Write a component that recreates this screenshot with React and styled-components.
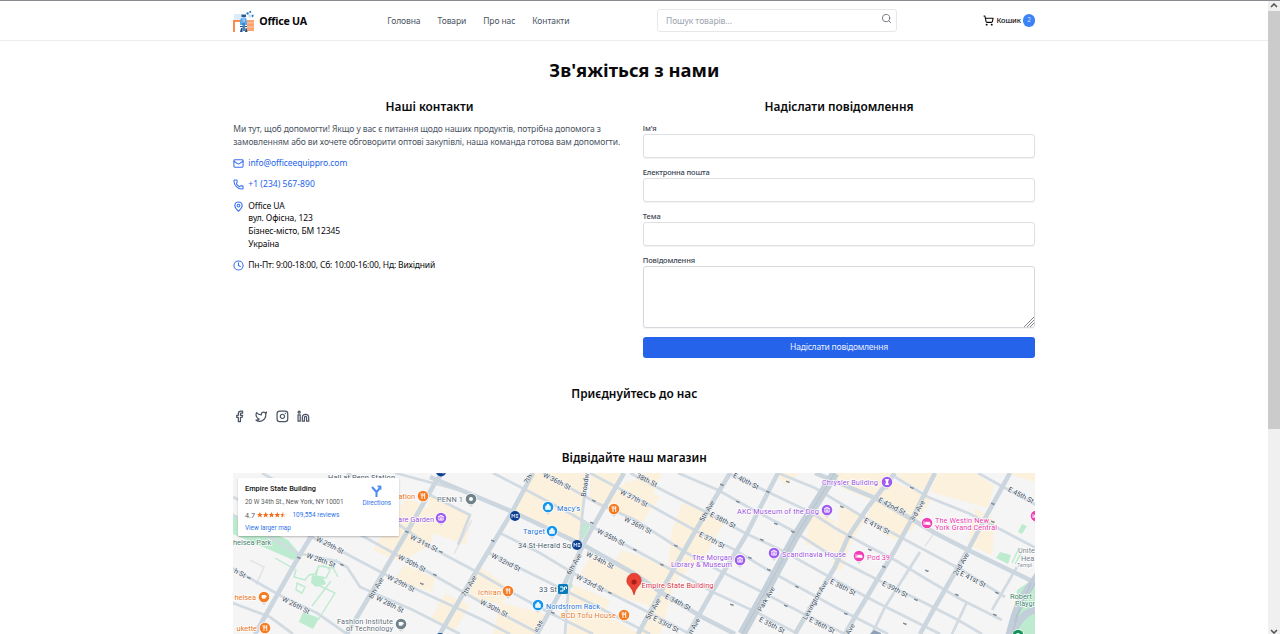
import React from "react";
import styled, { createGlobalStyle } from "styled-components";
import { Mail, Phone, MapPin, Clock, Search, ShoppingCart, Facebook, Twitter, Instagram, Linkedin } from "lucide-react";

const Global = createGlobalStyle`
  *, *::before, *::after { box-sizing: border-box; }
  html, body { margin: 0; height: 634px; overflow: hidden; background: #fff; }
  body { font-family: "Noto Sans", "Open Sans", sans-serif; font-size: 8.53px; line-height: 12.8px; color: #09090b; }
  h1, h2, p, ul { margin: 0; padding: 0; }
  a { color: inherit; text-decoration: none; }
  svg { display: block; flex: none; }
`;

const Screen = styled.div`
  display: flex;
  width: 1280px;
  height: 634px;
  overflow: hidden;
  border-top: 1px solid #8b898f;
`;
const Page = styled.div`
  width: 1268px;
  height: 633px;
  overflow: hidden;
`;
const Header = styled.header`
  height: 40px;
  border-bottom: 1px solid #ececee;
  padding: 0 232.7px 0 233.3px;
  display: flex;
  align-items: center;
`;
const Brand = styled.a`
  display: flex;
  align-items: center;
  gap: 4px;
  width: 154px;
  padding-top: 1px;
  font-size: 10.67px;
  font-weight: 700;
  letter-spacing: -0.25px;
`;
const Nav = styled.nav`
  display: flex;
  gap: 17px;
  width: 269.7px;
  padding-top: 1px;
  color: #4b5563;
  letter-spacing: -0.11px;
  white-space: nowrap;
`;
const SearchBox = styled.label`
  width: 240px;
  height: 23px;
  border: 1px solid #e5e7eb;
  border-radius: 3px;
  display: flex;
  justify-content: space-between;
  padding: 0 4px 0 8px;
  color: #71717a;
  svg { margin-top: 3px; }
`;
const SearchInput = styled.input`
  border: 0;
  outline: 0;
  padding: 1.5px 0 0;
  width: 190px;
  background: transparent;
  font: inherit;
  letter-spacing: -0.1px;
  &::placeholder { color: #9ca3af; }
`;
const Cart = styled.a`
  margin-left: auto;
  display: flex;
  align-items: center;
  gap: 2px;
  font-size: 7.47px;
  font-weight: 500;
  letter-spacing: -0.1px;
`;
const Badge = styled.span`
  width: 12.5px;
  height: 12.5px;
  border-radius: 50%;
  background: #3b82f6;
  color: #dbeafe;
  font-size: 6.4px;
  line-height: 12.5px;
  font-weight: 400;
  text-align: center;
`;
const Main = styled.main`
  padding: 17px 232.7px 0 233.3px;
`;
const Title = styled.h1`
  font-size: 18.4px;
  line-height: 24px;
  font-weight: 700;
  text-align: center;
`;
const Columns = styled.div`
  display: grid;
  grid-template-columns: minmax(0, 1fr) minmax(0, 1fr);
  gap: 17px;
  margin-top: 16px;
  height: 261px;
`;
const Heading = styled.h2`
  font-size: 11.85px;
  line-height: 17px;
  font-weight: 600;
  text-align: center;
`;
const Lead = styled.p`
  margin-top: 8px;
  color: #4b5563;
  letter-spacing: -0.105px;
  white-space: nowrap;
`;
const ContactRow = styled.div`
  display: flex;
  align-items: flex-start;
  gap: 4px;
  margin-top: 8.5px;
  color: ${(p) => (p.$link ? "#2563eb" : "#09090b")};
  letter-spacing: ${(p) => p.$track || 0}px;
  svg { color: #3b6fee; margin-top: 1px; }
`;
const Field = styled.label`
  display: block;
  margin-top: ${(p) => (p.$first ? "7px" : "8.5px")};
  font-size: 7.47px;
  line-height: 12px;
  font-weight: 500;
  letter-spacing: -0.13px;
  color: #374151;
`;
const Input = styled.input`
  display: block;
  width: 100%;
  height: 23.5px;
  border: 1px solid #dcdfe3;
  border-radius: 3px;
  box-shadow: 0 1px 1px rgba(0, 0, 0, 0.05);
  outline: 0;
`;
const AreaWrap = styled.div`
  position: relative;
  svg { position: absolute; right: 1px; bottom: 1px; }
`;
const Area = styled.textarea`
  display: block;
  width: 100%;
  height: 62px;
  resize: none;
  border: 1px solid #d5d8dd;
  border-radius: 3px;
  box-shadow: 0 1px 1px rgba(0, 0, 0, 0.05);
  outline: 0;
`;
const Submit = styled.button`
  display: block;
  width: 100%;
  height: 21.5px;
  margin-top: 8.5px;
  padding: 1px 0 0;
  border: 0;
  border-radius: 3px;
  background: #2563eb;
  color: #e8effd;
  font: inherit;
  letter-spacing: -0.22px;
`;
const Section = styled.section`
  margin-top: ${(p) => p.$top}px;
`;
const Socials = styled.div`
  display: flex;
  gap: 8.53px;
  margin-top: 8px;
  color: #4b5563;
`;
const MapFrame = styled.div`
  width: 802px;
  height: 161px;
  margin-top: 7.5px;
  overflow: hidden;
  background: #f4f4f5;
  display: grid;
  > * { grid-area: 1 / 1; }
`;
const PlaceCard = styled.div`
  position: relative;
  width: 161px;
  height: 58px;
  margin: 5px 0 0 5px;
  padding: 4px 8px 0 6.7px;
  background: #fff;
  border-radius: 1px;
  box-shadow: 0 1px 2px rgba(0, 0, 0, 0.25);
  display: flex;
  justify-content: space-between;
  font-family: Roboto, sans-serif;
  font-size: 6.4px;
  line-height: 13.2px;
  color: #5b5b5b;
  white-space: nowrap;
`;
const PlaceName = styled.div`
  font-size: 7.4px;
  font-weight: 500;
  color: #111;
`;
const BlueLink = styled.a`
  color: #2f73e8;
`;
const Rating = styled.div`
  display: flex;
  align-items: center;
  gap: 2px;
  font-size: 7.2px;
  a { margin-left: 4.5px; font-size: 6.5px; }
`;
const Directions = styled.a`
  width: 29px;
  padding-top: 3px;
  display: flex;
  flex-direction: column;
  align-items: center;
  color: #2f73e8;
`;
const Scrollbar = styled.div`
  width: 12px;
  height: 633px;
  background: #f0f0f0;
  display: flex;
  flex-direction: column;
  align-items: center;
  justify-content: space-between;
  svg { margin: 2px 0 0; }
`;
const Thumb = styled.div`
  width: 11.5px;
  height: 418px;
  background: #cbcbcb;
  margin: 3px 0 auto;
`;

function Logo() {
  return (
    <svg width="22" height="23" viewBox="0 0 22 23">
      <path d="M1 4h8v6H1z" fill="#dcecfb" />
      <path d="M0 10h8v2H2v10H0z" fill="#fb8a4b" />
      <path d="M13 10h8v11h-7V10z" fill="#fca36f" />
      <path d="M14 13h7M14 17h7" stroke="#ffd3b5" strokeWidth="0.8" />
      <path d="M7 10l1.500-2H13l1 3v4H7z" fill="#5fa6e6" />
      <path d="M8.500 4.500H13V7H8.500z" fill="#29598f" />
      <path d="M9.500 7h2.500v5H9.500z" fill="#8fc5f5" />
      <path d="M7 16h7v1H7zM8 18h1.500v4H7zM12.500 18h1l1 4h-2.500z" fill="#24517f" />
      <path d="M9.500 13h2.500v8H9.500z" fill="#3f86c9" />
      <path d="M13 3.500l1.500-1.500 1.500 1-1 2zM16 1.500l1.500-.8 1 1.500-1.500 1zM18.500 5l2-.5v2l-1.500 1z" fill="#287bbd" />
      <path d="M15 5l2-1 2 3-3 1z" fill="#c5e1fb" />
    </svg>
  );
}

const blocks = [
  "533,473 587,473 582,517 580,543 513,511",
  "590,473 622,473 603,510 590,500",
  "640,473 662,473 652,496 630,486",
  "628,480 660,497 640,525 604,504",
  "682,503 726,520 705,556 676,580 660,634 566,634 577,600 640,634 650,606 598,590 622,550 668,566 672,530",
  "592,555 632,575 618,594 580,575",
  "430,495 471,516 466,545 425,530",
  "407,497 440,515 430,545 400,562 373,550 392,520",
  "404,565 435,578 432,592 395,580",
  "477,565 512,590 500,605 460,594",
  "445,594 470,605 455,630 430,620",
  "500,602 548,615 535,634 493,634",
  "775,473 800,473 785,485",
  "835,473 893,473 870,500 842,488",
  "812,510 835,520 835,552 805,544",
  "840,505 866,518 850,545 842,570 832,570",
  "890,480 932,498 912,530 895,540 865,520 876,496",
  "898,473 934,473 926,492 897,478",
  "938,473 975,473 994,486 988,508 930,492",
  "975,508 995,520 992,555 968,545",
  "1005,473 1035,473 1035,482",
  "575,585 610,600 600,625 560,610",
];
const minor = [
  "978,473 1036,505", "895,477 928,497 968,513 992,525 1036,548",
  "778,473 815,488 835,500 865,518 902,538 962,570 1005,597",
  "728,473 768,492 812,513 835,528 862,543 895,560 928,580 962,600 1002,620",
  "678,473 718,490 748,507 795,532 835,558 882,582 925,603 958,620 982,634",
  "630,473 668,493 708,513 745,533 785,552 835,580 878,603 940,634",
  "590,473 635,497 698,532 735,550 768,570 795,585 835,607 888,634",
  "543,473 597,503 635,520 685,552 722,572 762,592 802,613 845,634",
  "493,473 530,492 573,515 603,533 635,550 672,570 715,593 758,613 798,634",
  "500,533 540,553 573,573 610,593 640,608 690,634",
  "487,552 550,583 590,603 650,634",
  "340,487 407,530 430,547 477,572 513,593 550,613 593,634",
  "310,507 397,555 430,573 463,592 500,613 540,634",
  "233,497 303,533 343,552 390,577 435,598 483,620 510,634",
  "230,513 297,553 336,561 347,567 360,587 413,610 460,634",
  "230,567 283,597 317,613 347,634", "230,602 270,617 293,634",
  "587,473 582,517 580,547 568,593 565,634",
  "920,552 885,607 872,634", "1017,567 992,610", "967,602 952,634",
  "262,473 285,486", "395,473 470,493", "430,495 470,515 458,545",
];
const avenues = [
  "350,473 340,490 312,535 298,558 267,613 255,634",
  "442,473 435,483 407,532 373,590 347,634",
  "533,473 512,512 477,570 452,613 440,634",
  "624,473 587,537 563,587 537,634",
  "730,473 693,535 658,597 638,634",
  "778,473 745,537 723,573 688,634",
  "895,473 868,507 848,537 835,567 815,600 795,634",
  "935,473 915,513 895,550 855,617 845,634",
  "1010,473 988,513 968,550 935,607 920,634",
  "430,477 513,512 587,547 633,573 662,593 702,617 735,634",
  "815,473 875,498 908,517 935,533 968,550 1036,583",
];
const streets = [
  [557, 481, "W 36th St", 27], [634, 498, "W 37th St", 27], [638, 525, "W 36th St", 27], [611, 537, "W 35th St", 27],
  [600, 560, "W 34th St", 27], [590, 583, "W 33rd St", 27], [506, 562, "W 32nd St", 27], [424, 543, "W 31st St", 27],
  [412, 563, "W 30th St", 27], [401, 583, "W 29th St", 27], [390, 604, "W 28th St", 27], [330, 545, "W 29th St", 27],
  [321, 560, "W 28th St", 20], [296, 605, "W 26th St", 27], [494, 608, "W 30th St", 27], [240, 573, "h St", 27],
  [746, 481, "E 40th St", 27], [723, 520, "E 38th St", 27], [712, 540, "E 37th St", 27], [678, 602, "E 34th St", 27],
  [666, 624, "E 33rd St", 27], [772, 625, "E 35th St", 27], [822, 625, "E 36th St", 27], [892, 506, "E 42nd St", 27],
  [877, 526, "E 41st St", 27], [1021, 495, "E 45th St", 27], [973, 579, "E 41st St", 27], [895, 589, "E 39th St", 27],
  [843, 587, "E 38th St", 27], [647, 480, "38th St", 27],
  [376, 588, "8th Ave", -60], [469, 586, "7th Ave", -60], [574, 564, "6th Ave", -60], [707, 511, "5th Ave", -60],
  [653, 609, "5th Ave", -60], [766, 599, "Park Ave", -60], [815, 600, "Lexington Ave", -60], [917, 511, "3rd Ave", -60],
  [961, 564, "2nd Ave", -60], [585, 485, "Broadw", -82], [528, 479, "7th", -60], [538, 626, "icas", -62],
  [850, 629, "Ave", -60], [694, 626, "n Ave", -60],
];
const places = [
  { x: 423, y: 496, c: "#f57c22", k: "food", t: [["ation", 415, 499]] },
  { x: 441, y: 518, c: "#a05bf0", k: "museum", tc: "#9b51e0", t: [["uare Garden", 434, 522]] },
  { x: 471, y: 499, c: "#71828a", k: "dot", tc: "#5f6f7b", t: [["PENN 1", 463, 502]] },
  { x: 548, y: 507, c: "#1595ee", k: "shop", tc: "#1a73d9", end: 1, t: [["Macy's", 557, 511]] },
  { x: 552, y: 531, c: "#1595ee", k: "shop", tc: "#1a73d9", t: [["Target", 545, 534]] },
  { x: 538, y: 605, c: "#1595ee", k: "shop", tc: "#1a73d9", end: 1, t: [["Nordstrom Rack", 546, 609]] },
  { x: 614, y: 509, c: "#f57c22", k: "food", t: [] },
  { x: 508, y: 591, c: "#f57c22", k: "food", t: [["Ichiran", 501, 595]] },
  { x: 624, y: 615, c: "#f57c22", k: "food", t: [["BCD Tofu House", 616, 618]] },
  { x: 264, y: 597, c: "#f57c22", k: "cup", t: [["helsea", 256, 600]] },
  { x: 265, y: 628, c: "#f57c22", k: "food", t: [["ukette", 257, 631]] },
  { x: 401, y: 624, c: "#71828a", k: "cup", tc: "#5f6f7b", t: [["Fashion Institute", 393, 624], ["of Technology", 393, 631]] },
  { x: 740, y: 560, c: "#a05bf0", k: "museum", tc: "#9b51e0", t: [["The Morgan", 732, 560], ["Library & Museum", 732, 567]] },
  { x: 827, y: 510, c: "#a05bf0", k: "museum", tc: "#9b51e0", t: [["AKC Museum of the Dog", 819, 514]] },
  { x: 774, y: 553, c: "#a05bf0", k: "museum", tc: "#9b51e0", end: 1, t: [["Scandinavia House", 782, 557]] },
  { x: 887, y: 482, c: "#a05bf0", k: "tower", tc: "#9b51e0", t: [["Chrysler Building", 878, 485]] },
  { x: 927, y: 523, c: "#f23fb8", k: "bed", tc: "#ec38ae", end: 1, t: [["The Westin New", 935, 523], ["York Grand Central", 935, 530]] },
  { x: 859, y: 556, c: "#f23fb8", k: "bed", tc: "#ec38ae", end: 1, t: [["Pod 39", 867, 560]] },
  { x: 1036, y: 516, c: "#f23fb8", k: "bed", t: [] },
  { x: 1018, y: 635, c: "#12935a", k: "dot", t: [] },
];
const widths = {
  "PENN 1": 26, "Macy's": 23, Target: 22, "Nordstrom Rack": 54, Ichiran: 23, "BCD Tofu House": 55, "Fashion Institute": 56,
  "of Technology": 47, "The Morgan": 40, "Library & Museum": 61, "AKC Museum of the Dog": 82, "Scandinavia House": 64,
  "Chrysler Building": 56, "The Westin New": 54, "York Grand Central": 62, "Pod 39": 23,
};
const glyphs = {
  food: <path d="M-1.8-2.8v2q0 .9.8.9V3M-.3-2.8v2q0 .9-.7.9M1.7 3v-5.6Q.8-2 .8 0h.9" fill="none" stroke="#fff" strokeWidth="0.9" />,
  museum: <path d="M-2.8-1.1L0-2.8l2.8 1.7zM-2.2-.4v2.5h4.4V-.4M-.7 1.8V.2H.8v1.6" fill="none" stroke="#fff" strokeWidth="0.9" />,
  shop: <path d="M-2.4-.7h4.8v3.1h-4.8zM-1.2-.7v-1q0-1 1.2-1t1.2 1v1" fill="#e5f5ff" stroke="#fff" strokeWidth="0.7" />,
  cup: <path d="M-2.3-2h4v2.4q0 1.3-1.3 1.3H-1q-1.3 0-1.3-1.3zM1.7-1.3h1v1.5h-1" fill="#fff" />,
  dot: <circle r="2" fill="#fff" />,
  tower: <path d="M-2-3h4L1 0l1 3h-4l1-3z" fill="#fff" />,
  bed: <path d="M-3-2v4M-3 .9h6v1.2M-1.4-.8h3.6q.8 0 .8.8v.9h-4.4z" fill="#fff" stroke="#fff" strokeWidth="0.8" />,
};
const halo = { stroke: "#fff", strokeWidth: 1.3, paintOrder: "stroke", strokeLinejoin: "round" };

function CityMap() {
  return (
    <svg width="802" height="161" viewBox="233 473 802 161" fontFamily="Roboto, sans-serif" fontSize="7.4">
      <rect x="233" y="473" width="802" height="161" fill="#f5f5f6" />
      {blocks.map((p) => <polygon key={p} points={p} fill="#fcf1dc" />)}
      <path d="M233 514l55 26 12 14-7 6-60-26z" fill="#bdebcf" />
      <path d="M312 575l11 2 3 7-10 3-5-4zM303 612l16 6-6 11-14-7zM583 519l8 5-9 17-3-8zM571 577l2 10-7 3zM1000 552l11 3-3 9-12-6zM1022 524l5 2-5 8-4-2zM1017 590l18-12v56h-22z" fill="#bdebcf" />
      <path d="M275 558l21 12-2 7 11 3 4-5 6-1 4-8 13 2 5-9M312 606l19-25M316 584l19 9-17 27M297 583l8 4-3 6-6-3zM318 567q7-3 12 3l-4 8-10-2zM330 562l8 15M1012 563l7-15 4 2-8 14" fill="none" stroke="#bdebcf" strokeWidth="1.4" />
      <path d="M250 560l14 7-8 18M472 520l-18 34M935 532l-10 14" fill="none" stroke="#e0e3e7" strokeWidth="1.5" />
      <g fill="none" stroke="#d3dbe2" strokeWidth="2.8">{minor.map((p) => <polyline key={p} points={p} />)}</g>
      <g fill="none" stroke="#ccd6de" strokeWidth="4.6">{avenues.map((p) => <polyline key={p} points={p} />)}</g>
      <polyline points="835,473 795,537 768,587 742,634" fill="none" stroke="#c5d0d9" strokeWidth="9" />
      <polyline points="835,473 795,537 768,587 742,634" fill="none" stroke="#b3bfcc" strokeWidth="0.8" />
      <path d="M1040 572L1020 600Q1012 620 1008 640M1036 610Q1020 612 1010 640" fill="none" stroke="#c2ced9" strokeWidth="7" />
      <path d="M1038 578L1018 615 1012 634M1031 583L1014 622" fill="none" stroke="#aebbc9" strokeWidth="0.8" />
      <path d="M870 634l4-4 7 3v1z" fill="#8ea0b6" />
      <g fill="#7b8894">
        {[[594, 501], [676, 546], [662, 565], [768, 492], [788, 482], [812, 513], [722, 485], [738, 502], [776, 524], [793, 532], [762, 540], [750, 558], [797, 587], [786, 606], [732, 605], [769, 570], [842, 507], [912, 488], [993, 504], [993, 522], [850, 537], [870, 550], [884, 567], [927, 571], [997, 593], [957, 595], [995, 615], [916, 600], [846, 614], [905, 624], [610, 593], [635, 550], [553, 613], [441, 552], [435, 575], [249, 578], [422, 584], [342, 565], [407, 532], [299, 558], [493, 541], [592, 523]].map(([x, y]) => (
          <path key={`${x}-${y}`} d={`M${x - 2} ${y - 1.4}l4 1.2-1 1.5-3-1.5z`} />
        ))}
      </g>
      <g fill="#35485a" fontSize="7" {...halo} strokeWidth="0.9">
        {streets.map(([x, y, t, a], i) => (
          <text key={i} transform={`translate(${x} ${y}) rotate(${a})`} textAnchor="middle" dy="2.5">{t}</text>
        ))}
      </g>
      <g fill="#43566a" {...halo}>
        <text x="328" y="479.5" textLength="67">Hall at Penn Station</text>
        <text x="518" y="548" textLength="53">34 St-Herald Sq</text>
        <text x="539" y="592" textLength="18">33 St</text>
        <text x="233" y="545" fill="#47816a">helsea Park</text>
        <text x="1018" y="553" fill="#74808b" textLength="17">Unite</text>
        <text x="1021" y="561" fill="#74808b">Hea</text>
        <text x="1017" y="567" fill="#8a949c" fontSize="5.5">Templ</text>
        <text x="1010" y="599" fill="#358364">Robert</text>
        <text x="1015" y="606" fill="#358364" textLength="20">Playgr</text>
      </g>
      {[[441, 471.5], [515, 516], [577, 545], [440, 638]].map(([x, y]) => (
        <g key={`${x}${y}`} transform={`translate(${x} ${y})`}>
          <circle r="5" fill="#0b3f91" />
          <path d="M-3 1.8v-3.6l1.4 2 1.4-2v3.6M1 -1.5h2.3M1 0h2.3M1 1.5h2.3" fill="none" stroke="#fff" strokeWidth="0.8" />
        </g>
      ))}
      <rect x="558" y="584" width="10" height="10" rx="1.5" fill="#087bb8" />
      <path d="M560 587h3v4h-3M564.5 590v-3h2v2" fill="none" stroke="#fff" strokeWidth="1" />
      {places.map((p) => (
        <g key={`${p.x}${p.y}`}>
          <g transform={`translate(${p.x} ${p.y})`}>
            <path d="M-3 5L0 8l3-3z" fill="#d9d9de" />
            <circle r="6" fill="#fff" />
            <circle r="5.3" fill={p.c} />
            {glyphs[p.k]}
          </g>
          {p.t.map(([t, x, y]) => (
            <text key={t} x={x} y={y} fill={p.tc || "#e87722"} textAnchor={p.end ? "start" : "end"} textLength={widths[t]} {...halo}>{t}</text>
          ))}
        </g>
      ))}
      <path d="M634 595q-1-5-4.3-8.5a7.3 7.3 0 1 1 8.6 0q-3.3 3.5-4.3 8.500z" fill="#ea4335" stroke="#c5221f" strokeWidth="0.5" />
      <circle cx="634" cy="582" r="2.6" fill="#a81f16" />
      <text x="641.5" y="587.5" textLength="72" fill="#d9303e" {...halo}>Empire State Building</text>
    </svg>
  );
}

function Stars() {
  const star = "M2.9 0l.8 2h2.1L4.2 3.3l.6 2.2-1.9-1.3L1 5.5l.6-2.2L0 2h2.1z";
  return (
    <svg width="29" height="6" viewBox="0 0 29 6" fill="#ef6c1a">
      {[0, 1, 2, 3].map((i) => <path key={i} transform={`translate(${i * 5.8} 0)`} d={star} />)}
      <path transform="translate(23.2 0)" d={star} fill="#f9cdb0" />
      <path transform="translate(23.2 0)" d="M2.9 0v4.2L1 5.5l.6-2.2L0 2h2.1z" />
    </svg>
  );
}

export default function App() {
  return (
    <>
      <Global />
      <Screen>
        <Page>
          <Header>
            <Brand href="#"><Logo />Office UA</Brand>
            <Nav>
              <a href="#">Головна</a><a href="#">Товари</a><a href="#">Про нас</a><a href="#">Контакти</a>
            </Nav>
            <SearchBox>
              <SearchInput placeholder="Пошук товарів..." />
              <Search size={11} />
            </SearchBox>
            <Cart href="#"><ShoppingCart size={11} strokeWidth={2.3} />Кошик<Badge>2</Badge></Cart>
          </Header>
          <Main>
            <Title>Зв'яжіться з нами</Title>
            <Columns>
              <div>
                <Heading>Наші контакти</Heading>
                <Lead>
                  Ми тут, щоб допомогти! Якщо у вас є питання щодо наших продуктів, потрібна допомога з<br />
                  замовленням або ви хочете обговорити оптові закупівлі, наша команда готова вам допомогти.
                </Lead>
                <ContactRow $link $track={-0.1}><Mail size={11} strokeWidth={2.3} /><a href="#">info@officeequippro.com</a></ContactRow>
                <ContactRow $link $track={0.04}><Phone size={11} strokeWidth={2.3} /><a href="#">+1 (234) 567-890</a></ContactRow>
                <ContactRow $track={-0.12}>
                  <MapPin size={11} strokeWidth={2.3} />
                  <div>Office UA<br />вул. Офісна, 123<br />Бізнес-місто, БМ 12345<br />Україна</div>
                </ContactRow>
                <ContactRow $track={-0.17}><Clock size={11} strokeWidth={2.3} />Пн-Пт: 9:00-18:00, Сб: 10:00-16:00, Нд: Вихідний</ContactRow>
              </div>
              <div>
                <Heading>Надіслати повідомлення</Heading>
                <Field $first>Ім'я<Input /></Field>
                <Field>Електронна пошта<Input /></Field>
                <Field>Тема<Input /></Field>
                <Field>
                  Повідомлення
                  <AreaWrap>
                    <Area />
                    <svg width="10" height="10" viewBox="0 0 10 10" stroke="#777" strokeWidth="0.9">
                      <path d="M0 10L10 0M3 10L10 3M6 10L10 6" />
                    </svg>
                  </AreaWrap>
                </Field>
                <Submit>Надіслати повідомлення</Submit>
              </div>
            </Columns>
            <Section $top={26}>
              <Heading>Приєднуйтесь до нас</Heading>
              <Socials>
                <Facebook size={12.8} strokeWidth={2.3} />
                <Twitter size={12.8} strokeWidth={2.3} />
                <Instagram size={12.8} strokeWidth={2.3} />
                <Linkedin size={12.8} strokeWidth={2.3} />
              </Socials>
            </Section>
            <Section $top={26}>
              <Heading>Відвідайте наш магазин</Heading>
              <MapFrame>
                <CityMap />
                <PlaceCard>
                  <div>
                    <PlaceName>Empire State Building</PlaceName>
                    <div>20 W 34th St., New York, NY 10001</div>
                    <Rating>4.7 <Stars /><BlueLink href="#">109,554 reviews</BlueLink></Rating>
                    <BlueLink href="#">View larger map</BlueLink>
                  </div>
                  <Directions href="#">
                    <svg width="11" height="12" viewBox="0 0 11 12" fill="none" stroke="#4b8cf0" strokeWidth="2">
                      <path d="M5.5 12V7L1 2M5.5 7L9 3" />
                      <path d="M6.5 1H10v3.5z" fill="#4b8cf0" strokeWidth="0.8" />
                    </svg>
                    Directions
                  </Directions>
                </PlaceCard>
              </MapFrame>
            </Section>
          </Main>
        </Page>
        <Scrollbar>
          <svg width="8" height="5" viewBox="0 0 8 5"><path d="M1 4l3-3 3 3" fill="none" stroke="#555" strokeWidth="1.6" /></svg>
          <Thumb />
          <svg width="8" height="5" viewBox="0 0 8 5"><path d="M1 1l3 3 3-3" fill="none" stroke="#555" strokeWidth="1.6" /></svg>
        </Scrollbar>
      </Screen>
    </>
  );
}
